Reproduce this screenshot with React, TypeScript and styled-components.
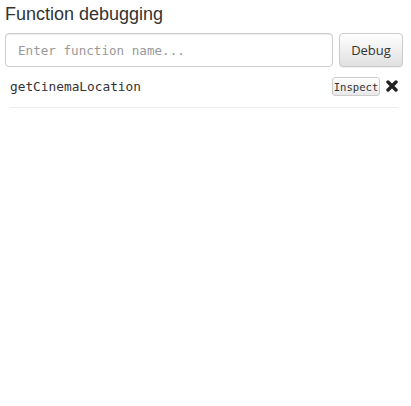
import React from "react";
import styled, { createGlobalStyle } from "styled-components";

const Global = createGlobalStyle`
  html, body { margin: 0; padding: 0; background: #fff; }
  body { font-family: "Liberation Sans", Arial, sans-serif; color: #333; }
  * { box-sizing: border-box; }
`;

const Panel = styled.div`
  padding: 4px 8px 0 5px;
  display: flex;
  flex-direction: column;
`;

const Title = styled.h1`
  margin: 0 0 8px 0;
  font-family: "Liberation Sans", Arial, sans-serif;
  font-size: 18px;
  line-height: 21px;
  font-weight: normal;
  color: #333;
`;

const InputRow = styled.div`
  display: flex;
  gap: 6px;
  height: 34px;
`;

const NameInput = styled.input`
  flex: 1;
  height: 34px;
  border: 1px solid #ccc;
  border-radius: 4px;
  padding: 0 12px;
  font-family: "DejaVu Sans Mono", monospace;
  font-size: 12.6px;
  color: #555;
  box-shadow: inset 0 1px 1px rgba(0,0,0,0.075);
  outline: none;
  &::placeholder { color: #999; }
`;

const DebugButton = styled.button`
  width: 64px;
  height: 34px;
  border: 1px solid #ccc;
  border-radius: 4px;
  background: linear-gradient(#fff, #e0e0e0);
  box-shadow: inset 0 1px 0 rgba(255,255,255,0.15), 0 1px 1px rgba(0,0,0,0.075);
  font-family: "Open Sans", sans-serif;
  font-size: 13px;
  color: #333;
  padding: 0;
`;

const List = styled.div`
  margin: 0 13px 0 10px;
`;

const Item = styled.div`
  display: flex;
  align-items: center;
  height: 41px;
  border-bottom: 1px solid #eee;
  padding-bottom: 1px;
`;

const FnName = styled.span`
  flex: 1;
  font-family: "DejaVu Sans Mono", monospace;
  font-size: 12.8px;
  color: #333;
`;

const InspectButton = styled.button`
  height: 19px;
  width: 48px;
  padding: 0;
  border: 1px solid #ccc;
  border-radius: 3px;
  background: linear-gradient(#fff, #e8e8e8);
  font-family: "DejaVu Sans Mono", monospace;
  font-size: 10.6px;
  color: #333;
  margin-right: 6px;
`;

const Remove = styled.span`
  display: inline-flex;
  width: 12px;
  height: 12px;
  margin-bottom: 2px;
`;

export default function App() {
  return (
    <>
      <Global />
      <Panel>
        <Title>Function debugging</Title>
        <InputRow>
          <NameInput placeholder="Enter function name..." />
          <DebugButton>Debug</DebugButton>
        </InputRow>
      </Panel>
      <List>
        <Item>
          <FnName>getCinemaLocation</FnName>
          <InspectButton>Inspect</InspectButton>
          <Remove>
            <svg viewBox="0 0 12 12" width="12" height="12">
              <path d="M2 2 L10 10 M10 2 L2 10" stroke="#222" strokeWidth="3.4" strokeLinecap="round" />
            </svg>
          </Remove>
        </Item>
      </List>
    </>
  );
}
